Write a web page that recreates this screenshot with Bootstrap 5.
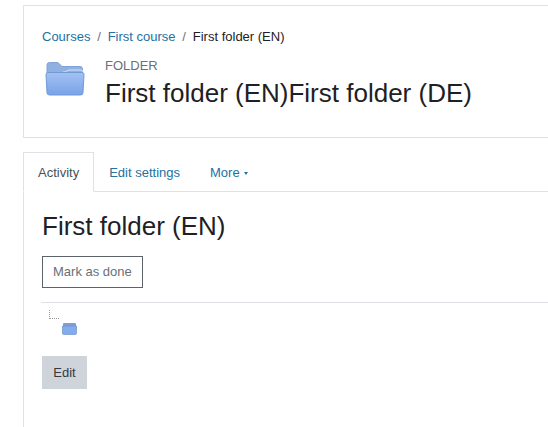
<!DOCTYPE html>
<html lang="en">

<head>
  <meta charset="UTF-8">
  <title>First folder (EN)</title>
  <link href="https://cdn.jsdelivr.net/npm/bootstrap@5.3.2/dist/css/bootstrap.min.css" rel="stylesheet">
  <style>
    html, body { overflow: hidden; height: 427px; }
    body { font-family: "Liberation Sans", Arial, sans-serif; font-size: 13px; color: #1d2125; background: #fff; }
    .page-wrap { margin-left: 23px; width: 525px; }
    .head-box { border: 1px solid #dee2e6; border-right: 0; margin-top: 5px; height: 133px; padding: 22px 18px 0; }
    .crumbs { font-size: 13px; line-height: 16px; margin: 0; padding-top: 1px; --bs-breadcrumb-divider-color: #6a737b; --bs-breadcrumb-item-padding-x: 6.8px; --bs-breadcrumb-margin-bottom: 0; white-space: nowrap; flex-wrap: nowrap; }
    .crumbs a, .tab-strip a.nav-link { color: #24719f; text-decoration: none; }
    .crumbs .active { color: #1d2125; }
    .title-row { margin-top: 13px; }
    .folder-big { width: 40px; height: 38px; margin: 1px 0 0 3px; flex: none; }
    .title-text { margin-left: 20px; }
    .kind-label { font-size: 13px; line-height: 16px; color: #6a7076; }
    .main-title { font-size: 26px; line-height: 31px; font-weight: 400; margin: 4px 0 0; white-space: nowrap; }
    .tab-strip { margin-top: 14px; height: 40px; border-bottom: 1px solid #dee2e6; --bs-nav-tabs-border-color: #dee2e6; flex-wrap: nowrap; }
    .tab-strip .nav-link { font-size: 13px; line-height: 16px; padding: 12px 14px 11px; border-radius: 0; height: 40px; }
    .tab-strip .nav-link.active { color: #495057; border-color: #dee2e6 #dee2e6 #fff; }
    .tab-strip .dropdown-toggle::after { margin-left: 4px; vertical-align: 2px; border-top-width: 3px; border-right-width: 2.5px; border-left-width: 2.5px; }
    .body-box { border-left: 1px solid #dee2e6; padding: 19px 0 0 18px; height: 236px; }
    .activity-title { font-size: 26px; line-height: 30px; font-weight: 400; margin: 0; }
    .done-btn { font-size: 13px; line-height: 16px; color: #6a7076; border: 1px solid #5d6469; border-radius: 0; padding: 7px 10px; margin-top: 15px; height: 32px; }
    .sep-line { border-top: 1px solid #dee2e6; margin: 14px 0 0 -1px; height: 54px; position: relative; }
    .tree-mark { position: absolute; left: 8px; top: 7px; width: 10px; height: 9px; border-left: 1px dotted #999; border-bottom: 1px dotted #999; }
    .folder-small { position: absolute; left: 21px; top: 19px; width: 15px; height: 13px; }
    .edit-btn { font-size: 13px; line-height: 16px; color: #343a40; background: #ced4da; border: 0; border-radius: 0; padding: 9px 11px; width: 45px; height: 33px; }
  </style>
</head>

<body>

  <div class="page-wrap">
    <div class="head-box">
      <nav aria-label="breadcrumb">
        <ol class="breadcrumb crumbs">
          <li class="breadcrumb-item"><a href="#">Courses</a></li>
          <li class="breadcrumb-item"><a href="#">First course</a></li>
          <li class="breadcrumb-item active" aria-current="page">First folder (EN)</li>
        </ol>
      </nav>
      <div class="d-flex title-row">
        <svg class="folder-big" viewBox="0 0 40 38">
          <defs>
            <linearGradient id="frontFill" x1="0" y1="0" x2="0" y2="1">
              <stop offset="0" stop-color="#a3c2f2"/>
              <stop offset="1" stop-color="#78a2e8"/>
            </linearGradient>
          </defs>
          <path d="M2 15 V6 Q2 3.5 4.500 3.500 H13 L17 7.500 H35 Q37.500 7.500 37.500 10 V15 Z" fill="#8fb0e0" stroke="#7fa3d8"/>
          <path d="M2 14 Q18 15 24 11 H36 Q38 11 38 13" fill="none" stroke="#d5e2f6"/>
          <path d="M1 15.500 Q1 13.500 3 13.500 H37 Q39 13.500 39 15.500 L38 33.500 Q38 36 35.500 36 H4.500 Q2 36 2 33.500 Z" fill="url(#frontFill)" stroke="#7099d6"/>
        </svg>
        <div class="title-text">
          <div class="kind-label">FOLDER</div>
          <h1 class="main-title">First folder (EN)First folder (DE)</h1>
        </div>
      </div>
    </div>

    <ul class="nav nav-tabs tab-strip">
      <li class="nav-item"><a class="nav-link active" href="#">Activity</a></li>
      <li class="nav-item"><a class="nav-link" href="#">Edit settings</a></li>
      <li class="nav-item"><a class="nav-link dropdown-toggle" href="#">More</a></li>
    </ul>

    <div class="body-box">
      <h2 class="activity-title">First folder (EN)</h2>
      <button class="btn done-btn" type="button">Mark as done</button>
      <div class="sep-line">
        <span class="tree-mark"></span>
        <svg class="folder-small" viewBox="0 0 15 13">
          <path d="M1 2 Q1 1 2 1 H13 Q14 1 14 2 V4 H1 Z" fill="#7f9fd2"/>
          <path d="M0.500 4 H14.500 V11 Q14.500 12.500 13 12.500 H2 Q0.500 12.500 0.500 11 Z" fill="#86abec" stroke="#6c93cf" stroke-width="0.7"/>
        </svg>
      </div>
      <button class="btn edit-btn" type="button">Edit</button>
    </div>
  </div>

  <script src="https://cdn.jsdelivr.net/npm/bootstrap@5.3.2/dist/js/bootstrap.bundle.min.js"></script>

</body>

</html>
